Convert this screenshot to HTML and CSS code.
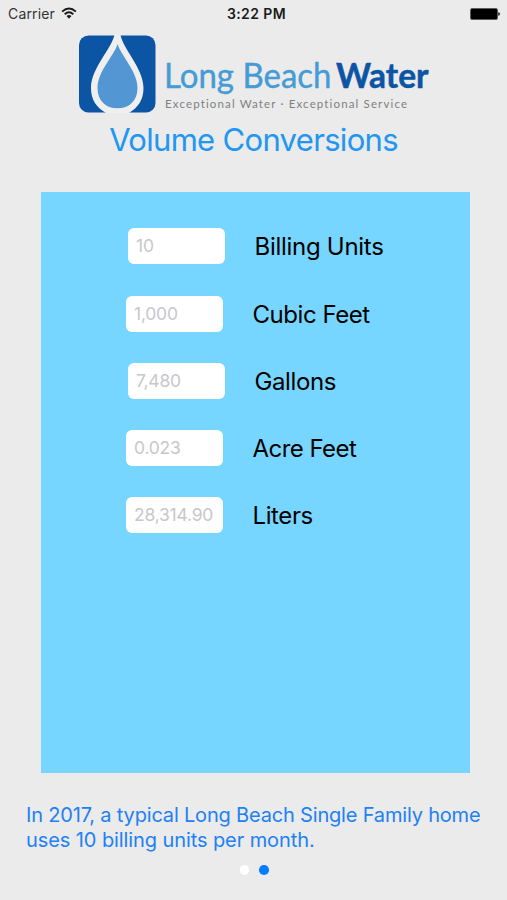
FILE: index.html
```html
<!DOCTYPE html>
<html lang="en">
<head>
<meta charset="utf-8">
<title>Volume Conversions</title>
<link rel="stylesheet" href="styles.css">
</head>
<body>
<header class="status">
  <div class="carrier"><span class="carrier-name">Carrier</span>
    <svg class="wifi" width="16" height="12" viewBox="0 0 16 12"><g fill="none" stroke="#1b1b1b" stroke-width="1.9"><path d="M1.1 4.6Q8-1.5 14.9 4.6"/><path d="M3.7 7.3Q8 3.4 12.3 7.3"/></g><path d="M5.5 9.1Q8 7.1 10.5 9.1L8 11.7Z" fill="#1b1b1b"/></svg>
  </div>
  <div class="time">3:22 PM</div>
  <svg class="battery" width="30" height="12" viewBox="0 0 30 12"><rect x=".5" y=".5" width="27" height="11" rx="1.5" fill="#000" stroke="#555" stroke-width=".8"/><path d="M28.2 4.2Q30 4.5 30 6T28.2 7.8Z" fill="#222"/></svg>
</header>
<svg class="logo" width="380" height="80" viewBox="0 0 380 80" role="img" aria-label="Long Beach Water">
  <rect x="1" y="1.5" width="76.5" height="77" rx="9.5" fill="#0b55a4"/>
  <path d="M36.6 0H42.4C44 14 65.500 34 65.500 54C65.500 66 60 73.500 51 79H28C18.500 73.500 13 66 13 54C13 34 34.500 14 36.600 0Z" fill="#efefef"/>
  <path d="M39.600 10C43 22 59.500 37 59.500 54C59.500 66.500 51.500 74.300 39.500 74.300S19.500 66.500 19.500 54C19.500 37 36 22 39.600 10Z" fill="#5297d3"/>
  <text class="brand-light" x="86" y="54" textLength="167.500" lengthAdjust="spacingAndGlyphs">Long Beach</text>
  <text class="brand-bold" x="258" y="54" textLength="92.500" lengthAdjust="spacingAndGlyphs">Water</text>
  <text class="tagline" x="87" y="74" textLength="242">Exceptional Water · Exceptional Service</text>
</svg>
<h1 class="title">Volume Conversions</h1>
<main class="panel">
  <label class="row"><input class="field" placeholder="10"><span class="unit billing">Billing Units</span></label>
  <label class="row shifted"><input class="field" placeholder="1,000"><span class="unit cubic">Cubic Feet</span></label>
  <label class="row"><input class="field" placeholder="7,480"><span class="unit gallons">Gallons</span></label>
  <label class="row shifted"><input class="field" placeholder="0.023"><span class="unit acre">Acre Feet</span></label>
  <label class="row shifted"><input class="field" placeholder="28,314.90"><span class="unit liters">Liters</span></label>
</main>
<p class="note"><span class="line-one">In 2017, a typical Long Beach Single Family home</span><br><span class="line-two">uses 10 billing units per month.</span></p>
<nav class="pager"><i class="dot"></i><i class="dot active"></i></nav>
</body>
</html>
```
FILE: styles.css
```css
* { box-sizing: border-box; }
body {
  margin: 0;
  width: 507px;
  height: 900px;
  overflow: hidden;
  background: #ebebeb;
  font-family: Inter, "Liberation Sans", sans-serif;
  display: flex;
  flex-direction: column;
}
.status {
  height: 28px;
  padding: 0 7px 0 8px;
  display: grid;
  grid-template-columns: 1fr auto 1fr;
  align-items: center;
  font-size: 14px;
  color: #1b1b1b;
}
.carrier { display: flex; align-items: center; gap: 6px; margin-top: -1px; }
.carrier-name { color: #333; letter-spacing: 0.15px; }
.wifi { margin-top: -1px; }
.time { font-weight: 600; letter-spacing: 0.4px; margin: -1px 0 0 5px; }
.battery { justify-self: end; margin-top: -1px; }
.logo { display: block; margin: 6px 0 0 78px; flex: none; }
.brand-light { font: 400 35px Lato, sans-serif; fill: #459bd5; stroke: #459bd5; stroke-width: 0.4px; }
.brand-bold { font: 700 35px Lato, sans-serif; fill: #0b55a4; stroke: #0b55a4; stroke-width: 0.5px; }
.tagline { font: 400 11.5px Lato, sans-serif; font-variant-ligatures: none; fill: #808080; }
.title {
  margin: 6px 0 0;
  height: 40px;
  line-height: 40px;
  text-align: center;
  font-size: 31px;
  font-weight: 400;
  letter-spacing: -0.68px;
  color: #2196f3;
}
.panel {
  width: 429px;
  height: 581px;
  margin: 32px 0 0 41px;
  padding: 36.4px 0 0 87px;
  background: #76d6ff;
  display: flex;
  flex-direction: column;
  gap: 31.250px;
}
.row { display: flex; align-items: center; gap: 29.500px; height: 36px; }
.shifted { margin-left: -2px; }
.field {
  width: 97px;
  height: 36px;
  padding: 0 8px 1px;
  border: 0;
  border-radius: 6px;
  background: #fff;
  font: 400 17.500px Inter, sans-serif;
  letter-spacing: -0.22px;
}
.field::placeholder { color: #c7c7cd; opacity: 1; }
.unit { font-size: 24px; line-height: 37px; color: #000; white-space: nowrap; position: relative; top: 0.5px; }
.billing { letter-spacing: -0.28px; }
.cubic { letter-spacing: -0.45px; }
.gallons { letter-spacing: -0.4px; }
.acre { letter-spacing: -0.55px; }
.liters { letter-spacing: -0.4px; }
.note {
  margin: 30px 0 0 26px;
  font-size: 20px;
  line-height: 24.500px;
  color: #2080f6;
  white-space: nowrap;
}
.line-one { letter-spacing: -0.18px; }
.line-two { letter-spacing: -0.09px; }
.pager { display: flex; gap: 10px; margin: 13px 0 0 239.500px; }
.dot { width: 9.500px; height: 9.500px; border-radius: 50%; background: #fff; }
.active { background: #087cff; }
```
